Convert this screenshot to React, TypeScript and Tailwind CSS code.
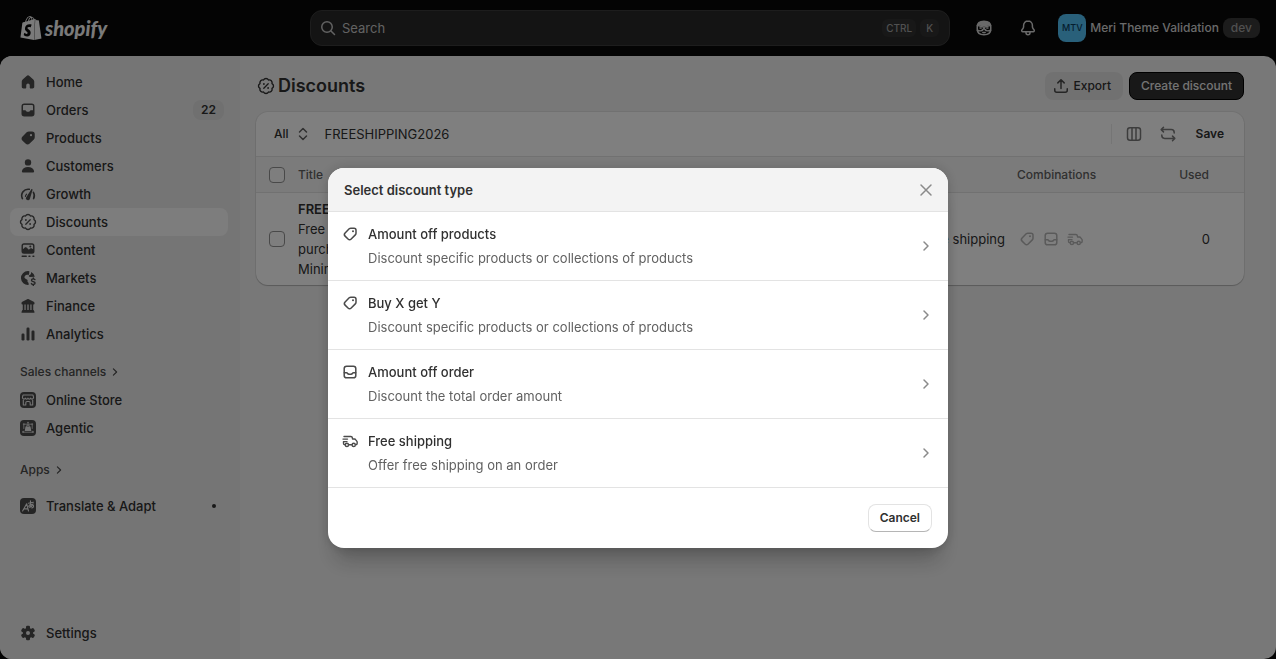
import type { ReactNode } from "react";
import { SiShopify } from "react-icons/si";

/* ---------- icons, all on a 20 x 20 grid ---------- */

function Icon({ children, className = "size-5" }: { children: ReactNode; className?: string }) {
  return (
    <svg
      viewBox="0 0 20 20"
      aria-hidden="true"
      className={`shrink-0 ${className}`}
      fill="none"
      stroke="currentColor"
      strokeWidth="1.5"
      strokeLinecap="round"
      strokeLinejoin="round"
    >
      {children}
    </svg>
  );
}

const SCALLOP =
  "M7.51 4A2.8 2.8 0 0 1 12.49 4A2.8 2.8 0 0 1 16 7.51A2.8 2.8 0 0 1 16 12.49A2.8 2.8 0 0 1 12.49 16A2.8 2.8 0 0 1 7.51 16A2.8 2.8 0 0 1 4 12.49A2.8 2.8 0 0 1 4 7.51A2.8 2.8 0 0 1 7.51 4Z";
const TAG =
  "M10.9 4.25h3.1a2 2 0 0 1 2 2v3c0 .6-.25 1.2-.7 1.65l-4.1 4.1a2.3 2.3 0 0 1-3.2 0l-2.9-2.9a2.3 2.3 0 0 1 0-3.2l4.1-4.1c.45-.4 1.05-.55 1.7-.55Z";

const HomeIcon = () => (
  <Icon>
    <path
      fill="currentColor"
      stroke="none"
      d="M8.6 3.95a2.1 2.1 0 0 1 2.8 0l3.9 3.5c.6.55.95 1.3.95 2.1v5.2c0 .95-.75 1.75-1.75 1.75h-1.75c-.55 0-1-.45-1-1v-2.25a1.75 1.75 0 0 0-3.5 0v2.25c0 .55-.45 1-1 1H5.5c-1 0-1.75-.8-1.75-1.75v-5.2c0-.8.35-1.55.95-2.1l3.9-3.5Z"
    />
  </Icon>
);

const OrdersIcon = () => (
  <Icon>
    <path
      fill="currentColor"
      stroke="none"
      fillRule="evenodd"
      d="M6.25 3.5a2.75 2.75 0 0 0-2.75 2.75v7.5a2.75 2.75 0 0 0 2.75 2.75h7.5a2.75 2.75 0 0 0 2.75-2.75v-7.5a2.75 2.75 0 0 0-2.75-2.75h-7.5Zm-.1 1.5h7.7c.65 0 1.15.5 1.15 1.15v4.1h-2.1c-.5 0-.9.3-1.1.65-.3.55-.8.85-1.4.85h-.8c-.6 0-1.1-.3-1.4-.85-.2-.35-.6-.65-1.1-.65H5v-4.1c0-.65.5-1.15 1.15-1.15Z"
    />
  </Icon>
);

const ProductsIcon = () => (
  <Icon>
    <path fill="currentColor" d={TAG} />
    <circle cx="13" cy="7.2" r="1.1" fill="#ebebeb" stroke="none" />
  </Icon>
);

const CustomersIcon = () => (
  <Icon>
    <circle cx="10" cy="6.4" r="3.2" fill="currentColor" stroke="none" />
    <path
      fill="currentColor"
      stroke="none"
      d="M3.9 15.1c.7-2.6 3-4.1 6.1-4.1s5.4 1.5 6.1 4.1c.2.8-.4 1.5-1.2 1.5H5.1c-.8 0-1.4-.7-1.2-1.5Z"
    />
  </Icon>
);

const GrowthIcon = () => (
  <Icon>
    <path d="M4.4 14.6a6.5 6.5 0 0 1 6.9-9.3M15.4 8.3a6.5 6.5 0 0 1 .2 6.3" strokeWidth="1.6" />
    <path d="M7.4 12.4a3 3 0 0 1 1.2-2.2" strokeWidth="1.1" />
    <path
      d="M14.1 5.1c.45.2.55.6.4 1l-2.5 8.3a2 2 0 1 1-3.6-1.5l4.8-7.5c.2-.35.5-.5.9-.3Z"
      fill="currentColor"
      stroke="none"
    />
  </Icon>
);

const DiscountIcon = () => (
  <Icon>
    <path d={SCALLOP} strokeWidth="1.4" />
    <path d="m7.8 12.2 4.4-4.4" strokeWidth="1.3" />
    <circle cx="7.9" cy="8" r=".9" fill="currentColor" stroke="none" />
    <circle cx="12.1" cy="12" r=".9" fill="currentColor" stroke="none" />
  </Icon>
);

const ContentIcon = () => (
  <Icon>
    <path
      fill="currentColor"
      stroke="none"
      fillRule="evenodd"
      d="M6 3.25A2.5 2.5 0 0 0 3.5 5.75v5.5a2.5 2.5 0 0 0 2.5 2.5h8a2.5 2.5 0 0 0 2.5-2.5v-5.5a2.5 2.5 0 0 0-2.5-2.5H6Zm.1 1.4h7.8c.65 0 1.15.5 1.15 1.15v3.5l-1.1-.8c-.6-.4-1.3-.3-1.8.1l-1.3 1.1-2.3-2.1c-.6-.5-1.5-.5-2 .05L4.95 9.3V5.8c0-.65.5-1.15 1.15-1.15Z"
    />
    <circle cx="12.3" cy="6.6" r="1" fill="currentColor" stroke="none" />
    <path d="M4.2 16.3h4M11 16.3h.9M15 16.3h.8" />
  </Icon>
);

const MarketsIcon = () => (
  <Icon>
    <path
      fill="currentColor"
      stroke="none"
      d="M10 3a7 7 0 1 0 .6 13.97v-2.2c-.8-.3-1.2-1-1.1-1.8l.1-1-2.4-1.4c-.8-.5-1-1.5-.4-2.2l.8-1c.4-.5 1-.7 1.6-.6l.7.1c.6.1 1.1-.3 1.2-.9l.3-2.8A7 7 0 0 0 10 3Z"
    />
    <path
      fill="currentColor"
      stroke="none"
      d="M13.3 3.9 12.8 6c-.1.5-.5.8-.9 1l-.7.3c-.5.2-.5.9-.1 1.2l.8.6 4.9-.4a7 7 0 0 0-3.5-4.8Z"
    />
    <path
      d="M16.9 11.6c-.4-.5-1-.7-1.7-.7-1 0-1.7.5-1.7 1.3 0 1.9 3.6.9 3.6 2.9 0 .8-.8 1.4-1.8 1.4-.8 0-1.5-.3-1.9-.9M15.3 10v.8M15.3 16.6v.8"
      strokeWidth="1.4"
    />
  </Icon>
);

const FinanceIcon = () => (
  <Icon>
    <path
      fill="currentColor"
      stroke="none"
      d="M9.2 3.2c.5-.25 1.1-.25 1.6 0l4.9 2.5c.5.25.8.75.8 1.3v.5c0 .55-.45 1-1 1h-11c-.55 0-1-.45-1-1V7c0-.55.3-1.05.8-1.3l4.9-2.5ZM4 15c0-.6.4-1 1-1h10c.6 0 1 .4 1 1l.5.7c.2.5-.1 1.05-.7 1.05H4.2c-.6 0-.9-.55-.7-1.05L4 15Z"
    />
    <path d="M5.6 8.5V14M8.5 8.5V14M11.5 8.5V14M14.4 8.5V14" strokeWidth="1.7" />
  </Icon>
);

const AnalyticsIcon = () => (
  <Icon>
    <g fill="currentColor" stroke="none">
      <rect x="3.5" y="9.5" width="3" height="7" rx="1.2" />
      <rect x="8.5" y="3.5" width="3" height="13" rx="1.2" />
      <rect x="13.5" y="6.5" width="3" height="10" rx="1.2" />
    </g>
  </Icon>
);

const SettingsIcon = () => (
  <Icon>
    <circle cx="10" cy="10" r="3.6" strokeWidth="3.2" />
    <g fill="currentColor" stroke="none">
      {[0, 60, 120, 180, 240, 300].map((angle) => (
        <rect key={angle} x="8" y="2.8" width="4" height="3.6" rx="1.2" transform={`rotate(${angle} 10 10)`} />
      ))}
    </g>
  </Icon>
);

const StoreAppIcon = () => (
  <Icon>
    <rect x="2" y="2" width="16" height="16" rx="4" fill="currentColor" stroke="none" />
    <g stroke="#ebebeb" strokeWidth="1.1">
      <path d="M5 5h10l.6 2.6a1.5 1.5 0 0 1-2.9.5 1.4 1.4 0 0 1-2.7 0 1.4 1.4 0 0 1-2.7 0 1.5 1.5 0 0 1-2.9-.5L5 5Z" />
      <path d="M5.3 10v5h2.5v-2.3c0-.7.5-1.2 1.2-1.2h2c.7 0 1.2.5 1.2 1.2V15h2.5v-5" />
    </g>
  </Icon>
);

const AgenticAppIcon = () => (
  <Icon>
    <rect x="2" y="2" width="16" height="16" rx="4" fill="currentColor" stroke="none" />
    <path d="M6 6.2h8M5.8 6.5v4M14.2 6.5v4M5 14.2h10" stroke="#c4c4c4" strokeWidth="1" />
    <path d="M7.5 8.5h5l.8 4.6H6.7l.8-4.6Z" fill="#ebebeb" stroke="none" />
    <path d="M8.6 8.3a1.4 1.4 0 0 1 2.8 0" stroke="#ebebeb" strokeWidth="1" />
    <g fill="#c4c4c4" stroke="none">
      <circle cx="10" cy="4.8" r="1" />
      <circle cx="5.8" cy="6.3" r="1" />
      <circle cx="14.2" cy="6.3" r="1" />
      <circle cx="5.2" cy="13.9" r="1.1" />
      <circle cx="14.8" cy="13.9" r="1.1" />
    </g>
  </Icon>
);

const TranslateAppIcon = () => (
  <Icon>
    <rect x="2" y="2" width="16" height="16" rx="4" fill="currentColor" stroke="none" />
    <g stroke="#ebebeb" strokeWidth="1.1">
      <path d="M4.6 15 8.7 7.8l1.8 7.2M6 12.9h3.8" />
      <path d="M10.4 7.2l5-1M12.4 4.8l.5 5.6M15 7.8c-.6 1.8-2 3.2-3.6 3.3-1.2-.2-.6-2.2 1.4-2.6 1.8-.3 3 .5 2.7 2-.2.7-.9 1.3-1.8 1.5" />
    </g>
  </Icon>
);

const ChevronRight = ({ className }: { className?: string }) => (
  <Icon className={className}>
    <path d="m8 6 4 4-4 4" />
  </Icon>
);

const TagIcon = () => (
  <Icon>
    <path d={TAG} />
    <circle cx="13" cy="7.2" r="1" fill="currentColor" stroke="none" />
  </Icon>
);

const OrderIcon = () => (
  <Icon>
    <rect x="4.2" y="4.2" width="11.6" height="11.6" rx="2.4" />
    <path d="M4.3 10.8h2.2c.5 0 .9.3 1.1.7.3.5.8.8 1.4.8h2c.6 0 1.1-.3 1.4-.8.2-.4.6-.7 1.1-.7h2.2" />
  </Icon>
);

const DeliveryIcon = () => (
  <Icon>
    <g strokeWidth="1.4">
      <path d="M4 5.5h6.8c.8 0 1.5.6 1.6 1.4l.1 1.1h1.9c.6 0 1.1.3 1.4.8l1 1.4c.3.4.4.8.4 1.3v.7c0 .8-.6 1.5-1.4 1.5M11.7 13.7H9M3.5 10.8v1.4c0 .8.4 1.3 1.1 1.5" />
      <path d="M3 8.1h4.5M3.6 10.6H7" />
      <circle cx="6.9" cy="13.9" r="1.6" />
      <circle cx="13.7" cy="13.9" r="1.6" />
    </g>
  </Icon>
);

const SearchIcon = () => (
  <Icon>
    <circle cx="9" cy="9" r="5.25" />
    <path d="m13 13 3.5 3.5" />
  </Icon>
);

const SidekickIcon = () => (
  <Icon>
    <path d="M3.25 8.5C3.25 5 5.5 3.2 10 3.2s6.75 1.8 6.75 5.3v2.7c0 3.7-2.3 5.5-6.75 5.5s-6.75-1.8-6.75-5.5V8.5Z" />
    <path d="M3.5 7.2C4.2 4.3 6.3 3 10 3s5.8 1.3 6.5 4.2L10 8.6 3.5 7.2Z" fill="currentColor" stroke="none" />
    <path d="M3.3 7.4 10 9.2l6.7-1.8M3.3 12.2c1.9.9 4.7.9 5.7-.7l1-1.3 1 1.3c1 1.6 3.8 1.6 5.7.7" />
    <path d="M6 9.9h1.2M12.8 9.9H14M8.8 14.4c.8.3 1.6.3 2.4 0" />
  </Icon>
);

const BellIcon = () => (
  <Icon>
    <path d="M10 2.9c-2.5 0-4.4 1.9-4.4 4.4v1.2c0 .8-.3 1.6-.8 2.2l-.9 1.2c-.5.8 0 1.85.9 1.85h10.4c.9 0 1.4-1.05.9-1.85l-.9-1.2c-.5-.6-.8-1.4-.8-2.2V7.3c0-2.5-1.9-4.4-4.4-4.4Z" />
    <path d="M8 14v.7a2 2 0 0 0 4 0V14" />
  </Icon>
);

const ExportIcon = () => (
  <Icon>
    <path d="M10 12.5V4M6.8 6.9 10 3.7l3.2 3.2M3.75 12.7v1.5c0 1.1.9 2 2 2h8.5c1.1 0 2-.9 2-2v-1.5" />
  </Icon>
);

const SelectIcon = () => (
  <Icon>
    <path d="M6.5 8 10 4.5 13.5 8M6.5 12l3.5 3.5 3.5-3.5" />
  </Icon>
);

const ColumnsIcon = () => (
  <Icon>
    <rect x="3.5" y="3.75" width="13" height="12.5" rx="2.5" />
    <path d="M8 4v12M12 4v12" />
  </Icon>
);

const SwapIcon = () => (
  <Icon>
    <path d="M5.5 3.3 3.2 5.6l2.3 2.3M3.5 5.6h9.8c1.7 0 2.9 1.1 2.9 2.8v.5M14.5 12.1l2.3 2.3-2.3 2.3M16.5 14.4H6.7c-1.7 0-2.9-1.1-2.9-2.8v-.5" />
  </Icon>
);

const CloseIcon = () => (
  <Icon>
    <path d="m5 5 10 10M15 5 5 15" />
  </Icon>
);

/* ---------- data ---------- */

const NAV = [
  { label: "Home", icon: <HomeIcon /> },
  { label: "Orders", icon: <OrdersIcon />, badge: "22" },
  { label: "Products", icon: <ProductsIcon /> },
  { label: "Customers", icon: <CustomersIcon /> },
  { label: "Growth", icon: <GrowthIcon /> },
  { label: "Discounts", icon: <DiscountIcon />, active: true },
  { label: "Content", icon: <ContentIcon /> },
  { label: "Markets", icon: <MarketsIcon /> },
  { label: "Finance", icon: <FinanceIcon /> },
  { label: "Analytics", icon: <AnalyticsIcon /> },
];

const DISCOUNT_TYPES = [
  {
    title: "Amount off products",
    description: "Discount specific products or collections of products",
    icon: <TagIcon />,
  },
  {
    title: "Buy X get Y",
    description: "Discount specific products or collections of products",
    icon: <TagIcon />,
  },
  { title: "Amount off order", description: "Discount the total order amount", icon: <OrderIcon /> },
  { title: "Free shipping", description: "Offer free shipping on an order", icon: <DeliveryIcon /> },
];

/* ---------- page parts ---------- */

interface NavItemProps {
  label: string;
  icon: ReactNode;
  badge?: string;
  active?: boolean;
  dot?: boolean;
}

function NavItem({ label, icon, badge, active, dot }: NavItemProps) {
  return (
    <a
      href="#"
      className={`flex h-7 items-center gap-2 rounded-lg pl-2 text-[13px] leading-5 font-[550] text-[#303030] ${active ? "bg-[#fafafa]" : ""}`}
    >
      <span className="text-[#4a4a4a]">{icon}</span>
      <span className="flex-1">{label}</span>
      {badge && <span className="mr-1 rounded-lg bg-[#e0e0e0] px-2 text-xs leading-5 font-semibold">{badge}</span>}
      {dot && <span className="mr-3 size-1 rounded-full bg-[#303030]" />}
    </a>
  );
}

function SectionTitle({ children }: { children: ReactNode }) {
  return (
    <button type="button" className="flex h-7 items-center gap-px pl-[10px] text-xs font-[550] text-[#4a4a4a]">
      {children}
      <ChevronRight className="size-4" />
    </button>
  );
}

function Sidebar() {
  return (
    <nav className="flex w-60 shrink-0 flex-col bg-[#ebebeb] pt-3 pr-3 pb-3 pl-[10px]">
      {NAV.map((item) => (
        <NavItem key={item.label} {...item} />
      ))}
      <div className="mt-[10px] flex flex-col">
        <SectionTitle>Sales channels</SectionTitle>
        <NavItem label="Online Store" icon={<StoreAppIcon />} />
        <NavItem label="Agentic" icon={<AgenticAppIcon />} />
      </div>
      <div className="mt-[14px] flex flex-col">
        <SectionTitle>Apps</SectionTitle>
        <div className="mt-2">
          <NavItem label="Translate & Adapt" icon={<TranslateAppIcon />} dot />
        </div>
      </div>
      <div className="mt-auto">
        <NavItem label="Settings" icon={<SettingsIcon />} />
      </div>
    </nav>
  );
}

function TopBar() {
  return (
    <header className="flex h-14 items-center pr-4">
      <div className="flex flex-1">
        <a href="#" aria-label="Shopify home" className="ml-[19px] flex items-center gap-[2px] text-[#f4f4f4]">
          <SiShopify className="size-6" />
          <span className="font-['Lato','Open_Sans',sans-serif] text-xl leading-6 font-black italic">shopify</span>
        </a>
      </div>
      <label className="flex h-9 w-[640px] items-center gap-1 rounded-xl border border-[#3a3a3a] bg-[#282828] pr-[10px] pl-[7px] text-[#c4c4c4]">
        <SearchIcon />
        <input
          type="text"
          aria-label="Search"
          placeholder="Search"
          className="h-5 min-w-0 flex-1 bg-transparent text-[13px] leading-5 text-[#e3e3e3] outline-none placeholder:text-[#c4c4c4]"
        />
        <kbd className="rounded-md bg-[#303030] px-1 font-['Inter',sans-serif] text-[10px] leading-[18px] font-medium text-[#a0a0a0]">
          CTRL
        </kbd>
        <kbd className="rounded-md bg-[#303030] px-[6px] font-['Inter',sans-serif] text-[10px] leading-[18px] font-medium text-[#a0a0a0]">
          K
        </kbd>
      </label>
      <div className="flex flex-1 items-center justify-end text-[#d4d4d4]">
        <button type="button" aria-label="Sidekick" className="mr-6">
          <SidekickIcon />
        </button>
        <button type="button" aria-label="Notifications" className="mr-5">
          <BellIcon />
        </button>
        <button type="button" className="flex items-center gap-1 text-xs font-[550] whitespace-nowrap">
          <span className="flex size-7 items-center justify-center rounded-lg bg-[#52c0f5] text-[9px] text-[#0a3c5c]">
            MTV
          </span>
          Meri Theme Validation
          <span className="rounded-lg bg-[#383838] px-2 text-xs leading-5 text-[#a0a0a0]">dev</span>
        </button>
      </div>
    </header>
  );
}

function Checkbox({ label }: { label: string }) {
  return (
    <input
      type="checkbox"
      aria-label={label}
      className="block size-4 appearance-none rounded-[4px] border border-[#929292] bg-[#fdfdfd]"
    />
  );
}

function DiscountTable() {
  return (
    <section className="mt-3 overflow-hidden rounded-xl bg-white shadow-[0_1px_1px_rgba(0,0,0,0.2),0_0_0_1px_rgba(0,0,0,0.06)]">
      <div className="flex h-11 items-center pr-5 pl-[18px] text-[13px] leading-5 text-[#303030]">
        <button type="button" className="flex items-center gap-1 text-xs font-[550]">
          All
          <span className="text-[#616161]">
            <SelectIcon />
          </span>
        </button>
        <button type="button" className="ml-3">
          FREESHIPPING2026
        </button>
        <div className="ml-auto flex items-center text-[#7a7a7a]">
          <span className="mr-3 h-5 w-px bg-[#ebebeb]" />
          <button type="button" aria-label="Edit columns" className="mr-[14px]">
            <ColumnsIcon />
          </button>
          <button type="button" aria-label="Sort" className="mr-[18px]">
            <SwapIcon />
          </button>
          <button type="button" className="text-xs font-semibold text-[#303030]">
            Save
          </button>
        </div>
      </div>
      <table className="w-full table-fixed border-collapse text-left text-[13px] leading-5 text-[#303030]">
        <thead className="border-y border-[#e3e3e3] bg-[#f7f7f7] text-xs text-[#616161]">
          <tr className="h-9">
            <th className="w-[42px] pl-[13px]">
              <Checkbox label="Select all discounts" />
            </th>
            <th className="w-[240px] font-[550]">Title</th>
            <th />
            <th className="w-[240px]" />
            <th className="w-[140px] font-[550]">Combinations</th>
            <th className="w-[87px] pr-[35px] text-right font-[550]">Used</th>
          </tr>
        </thead>
        <tbody>
          <tr>
            <td className="pl-[13px]">
              <Checkbox label="Select FREESHIPPING2026" />
            </td>
            <td className="py-[6px]">
              <span className="block font-semibold">FREESHIPPING2026</span>
              Free order
              <br />
              purchase
              <br />
              Minimum
            </td>
            <td />
            <td className="pr-3 text-right">Free shipping</td>
            <td>
              <div className="flex gap-1 text-[#b5b5b5]">
                <TagIcon />
                <OrderIcon />
                <DeliveryIcon />
              </div>
            </td>
            <td className="pr-[34px] text-right">0</td>
          </tr>
        </tbody>
      </table>
    </section>
  );
}

function DiscountModal() {
  return (
    <div className="fixed inset-0 flex items-center justify-center bg-black/50 pt-[57px]">
      <div
        role="dialog"
        aria-labelledby="modal-title"
        className="w-full max-w-[620px] overflow-hidden rounded-2xl bg-white shadow-[0_20px_20px_-8px_rgba(26,26,26,0.28),0_0_12px_rgba(26,26,26,0.2)]"
      >
        <div className="flex h-11 items-center justify-between border-b border-[#e3e3e3] bg-[#f3f3f3] pr-3 pl-4">
          <h2 id="modal-title" className="text-[13px] leading-5 font-semibold text-[#303030]">
            Select discount type
          </h2>
          <button type="button" aria-label="Close" className="text-[#8a8a8a]">
            <CloseIcon />
          </button>
        </div>
        <ul>
          {DISCOUNT_TYPES.map((type) => (
            <li key={type.title} className="border-b border-[#e3e3e3]">
              <button type="button" className="flex w-full items-center p-3 text-left text-[13px] leading-5">
                <span className="mr-2 self-start text-[#4a4a4a]">{type.icon}</span>
                <span className="flex flex-1 flex-col gap-1">
                  <span className="font-[550] text-[#303030]">{type.title}</span>
                  <span className="text-[#616161]">{type.description}</span>
                </span>
                <ChevronRight className="size-5 text-[#8a8a8a]" />
              </button>
            </li>
          ))}
        </ul>
        <div className="flex justify-end p-4">
          <button
            type="button"
            className="h-7 rounded-lg border border-[#e3e3e3] border-b-[#b5b5b5] bg-white px-[11px] text-xs font-semibold text-[#303030]"
          >
            Cancel
          </button>
        </div>
      </div>
    </div>
  );
}

export default function App() {
  return (
    <div className="flex min-h-screen flex-col bg-[#080808] font-['Inter','Liberation_Sans',sans-serif]">
      <TopBar />
      <div className="flex flex-1 overflow-hidden rounded-xl bg-[#f1f1f1]">
        <Sidebar />
        <main className="min-w-0 flex-1 pt-4 pr-8 pl-4">
          <div className="flex h-7 items-center text-[#303030]">
            <DiscountIcon />
            <h1 className="ml-[2px] text-lg font-semibold">Discounts</h1>
            <button
              type="button"
              className="mr-[6px] ml-auto flex h-7 items-center gap-[2px] rounded-lg bg-[#e3e3e3] pr-3 pl-[6px] text-xs font-[550]"
            >
              <span className="text-[#4a4a4a]">
                <ExportIcon />
              </span>
              Export
            </button>
            <button
              type="button"
              className="h-7 rounded-lg border border-black bg-[#303030] px-[11px] text-xs font-[550] text-[#e8e8e8]"
            >
              Create discount
            </button>
          </div>
          <DiscountTable />
        </main>
      </div>
      <DiscountModal />
    </div>
  );
}
